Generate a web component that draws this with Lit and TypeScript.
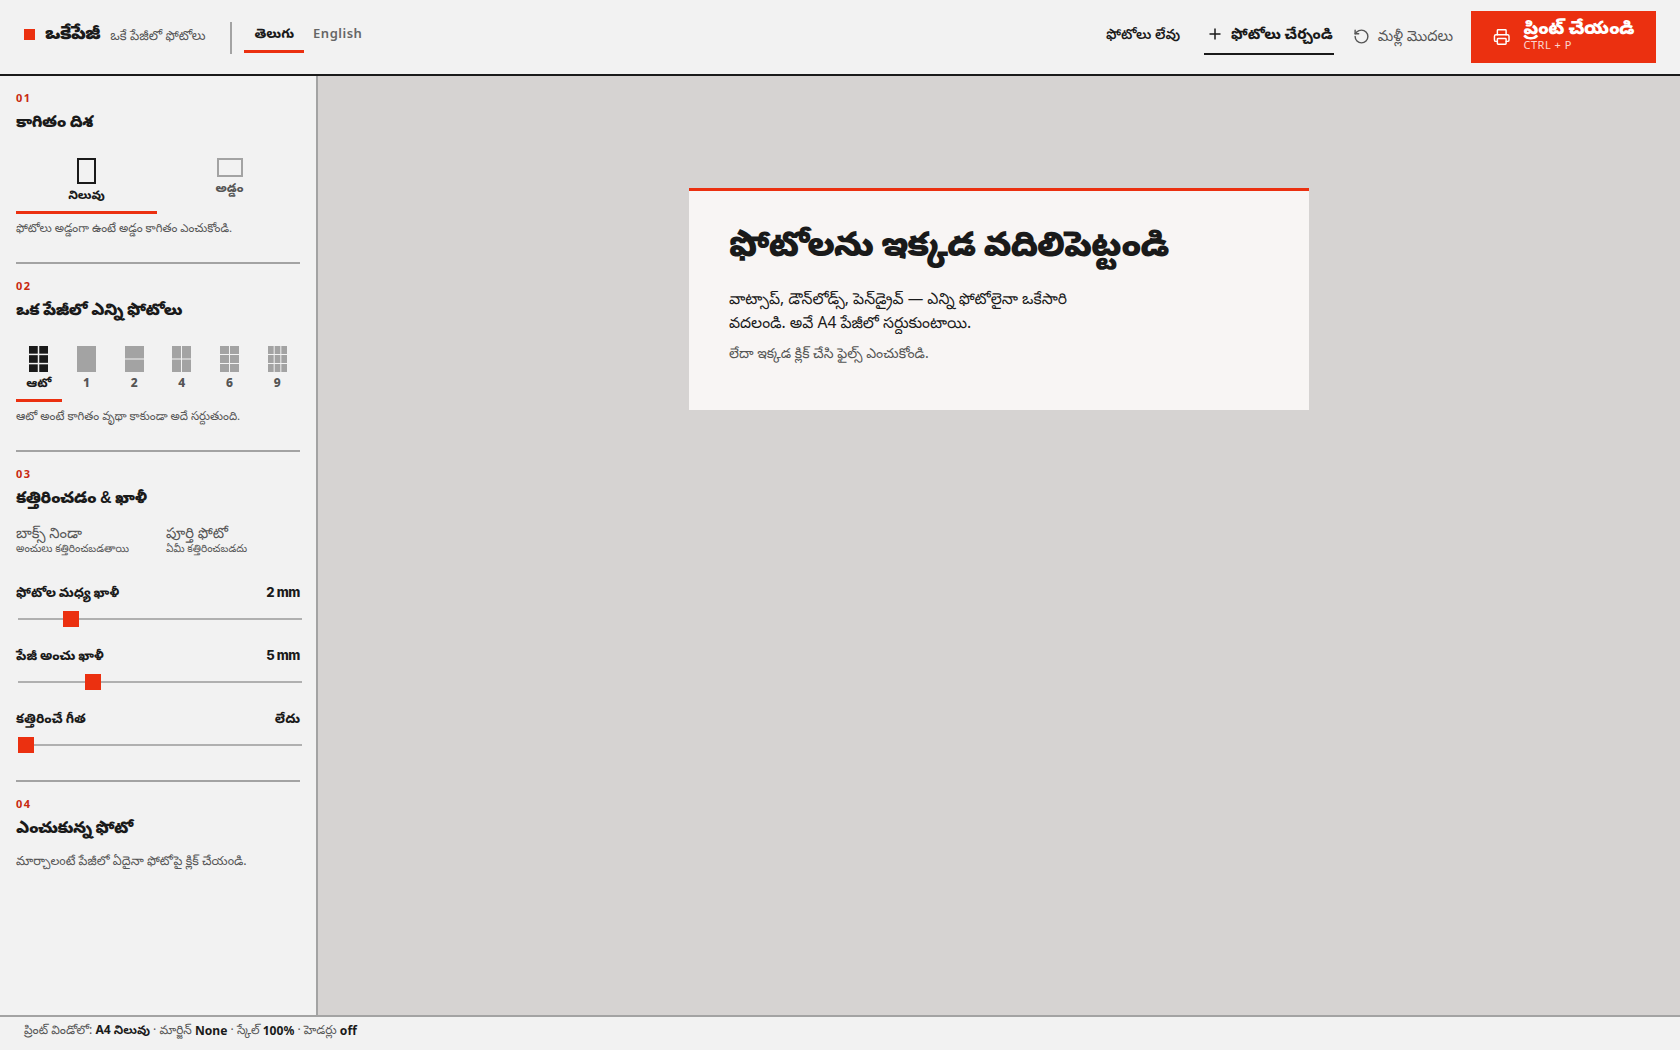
import { LitElement, html, css, svg } from "lit";
import { customElement } from "lit/decorators.js";

const GRIDS: [string, number, number, boolean][] = [
  ["ఆటో", 2, 3, true],
  ["1", 1, 1, false],
  ["2", 1, 2, false],
  ["4", 2, 2, false],
  ["6", 2, 3, false],
  ["9", 3, 3, false],
];

@customElement("app-root")
export class AppRoot extends LitElement {
  static styles = css`
    :host { display: flex; flex-direction: column; height: 1050px; overflow: hidden; background: #f2f2f2; color: #1a1a1a; font-family: "Noto Sans", "Noto Sans Telugu", sans-serif; }
    * { box-sizing: border-box; }
    header { height: 76px; flex: none; border-bottom: 2px solid #1a1a1a; display: flex; align-items: center; padding: 0 24px; }
    .sq { width: 11px; height: 11px; background: #eb3010; margin: 0 10px 6px 0; }
    .logo { font: 900 18px "Liberation Sans", "Noto Sans Telugu", sans-serif; letter-spacing: -.5px; margin-bottom: 4px; }
    .tag { font-size: 13px; color: #555; margin: 0 0 2px 10px; }
    .vr { width: 2px; height: 32px; background: #a3a3a3; margin: 2px 12px 0 25px; }
    .lang { height: 32px; padding: 0 10px 5px 9px; display: flex; align-items: center; font-size: 13px; font-weight: 600; color: #666; letter-spacing: .5px; border-bottom: 3px solid transparent; }
    .lang.on { color: #1a1a1a; border-color: #eb3010; letter-spacing: 0; font-weight: 800; padding: 0 10px 4px; }
    .sp { flex: 1; }
    .count { font-size: 14px; font-weight: 600; margin-right: 24px; padding-bottom: 4px; }
    .add { height: 36px; display: flex; align-items: center; gap: 10px; border-bottom: 2px solid #1a1a1a; padding: 0 1px 4px 5px; font-size: 14.5px; font-weight: 800; }
    .reset { display: flex; align-items: center; gap: 8px; font-size: 14.6px; color: #555; margin: 0 18px 2px 19px; }
    .print { width: 185px; height: 52px; background: #eb3010; color: #fff; display: flex; align-items: center; gap: 13px; padding: 0 22px 4px; }
    .print svg { margin-top: 4px; }
    .print b { display: block; font: 900 18px/20px "Liberation Sans", "Noto Sans Telugu", sans-serif; letter-spacing: -.5px; white-space: nowrap; }
    .print small { display: block; font-size: 11px; line-height: 14px; letter-spacing: .5px; opacity: .8; }
    .body { flex: 1; display: flex; min-height: 0; }
    aside { width: 318px; flex: none; border-right: 2px solid #a3a3a3; padding: 14px 16px 0; }
    section { border-bottom: 2px solid #a3a3a3; padding-bottom: 25px; margin-bottom: 14px; }
    section.s3 { padding-bottom: 10px; }
    section:last-child { border: 0; }
    .no { font-size: 11px; font-weight: 700; letter-spacing: 1.5px; color: #c8290f; line-height: 16px; }
    h2 { margin: 3px 0 12.5px; font: 900 16px/26px "Liberation Sans", "Noto Sans Telugu", sans-serif; letter-spacing: -.5px; }
    .hint { font-size: 11.6px; line-height: 18px; color: #555; margin: 0; }
    .hint.lg { font-size: 12.55px; margin-top: -1.5px; }
    .two { display: grid; grid-template-columns: 1fr 1fr; gap: 2px; margin: 15px 0 5px; }
    .ori { height: 64px; display: flex; flex-direction: column; align-items: center; padding-top: 8px; font: 800 12px/18px "Liberation Sans", "Noto Sans Telugu", sans-serif; color: #555; border-bottom: 3px solid transparent; }
    .ori.on { color: #1a1a1a; border-color: #eb3010; }
    .ori i { display: block; border: 2px solid #a3a3a3; width: 26px; height: 19px; margin-bottom: 2px; }
    .ori.on i { border-color: #1a1a1a; width: 19px; height: 26px; }
    .six { display: grid; grid-template-columns: repeat(6, 1fr); gap: 2px; margin: 17px 0 5px; }
    .cell { height: 62px; display: flex; flex-direction: column; align-items: center; font-size: 12px; font-weight: 800; line-height: 18px; color: #555; border-bottom: 3px solid transparent; padding-top: 6px; }
    .cell.on { color: #1a1a1a; border-color: #eb3010; font-family: "Liberation Sans", "Noto Sans Telugu", sans-serif; }
    .cell svg { display: block; margin-bottom: 2px; fill: #a3a3a3; }
    .cell.on svg { fill: #1a1a1a; }
    .fit { display: grid; grid-template-columns: 150px 1fr; margin-bottom: 26px; font-size: 14.7px; line-height: 17px; color: #555; }
    .fit small { display: block; font-size: 10.5px; line-height: 14px; }
    .row { display: flex; justify-content: space-between; font: 800 13px/22px "Inter", "Noto Sans Telugu", sans-serif; }
    .row .v { letter-spacing: -.4px; }
    input[type=range] { -webkit-appearance: none; appearance: none; display: block; width: 100%; height: 16px; margin: 8px 2px 17px; background: transparent; }
    input[type=range]::-webkit-slider-runnable-track { height: 2px; background: #b0b0b0; }
    input[type=range]::-webkit-slider-thumb { -webkit-appearance: none; width: 16px; height: 16px; margin-top: -7px; background: #eb3010; border: 0; border-radius: 0; }
    main { flex: 1; background: #d6d3d2; display: flex; justify-content: center; align-items: flex-start; padding-top: 112px; }
    .card { width: 620px; height: 222px; background: #f8f5f4; border-top: 3px solid #eb3010; padding: 30px 40px; }
    h1 { margin: 0 0 19px; font: 900 34px/46px "Liberation Sans", "Noto Sans Telugu", sans-serif; letter-spacing: -1.1px; }
    .lead { width: 380px; margin: 0 0 8px; font-size: 15.6px; line-height: 24px; }
    .or { margin: 0; font-size: 14px; line-height: 22px; color: #555; }
    footer { height: 35px; flex: none; border-top: 2px solid #a3a3a3; padding: 0 24px 6px; display: flex; align-items: center; font-size: 12.1px; color: #555; white-space: pre; }
    footer b { color: #1a1a1a; }
  `;

  grid(c: number, r: number, on: boolean) {
    const g = on ? 1.5 : 1, W = 19, H = 26;
    const w = (W - g * (c - 1)) / c, h = (H - g * (r - 1)) / r;
    const rects = [];
    for (let y = 0; y < r; y++) for (let x = 0; x < c; x++)
      rects.push(svg`<rect x=${x * (w + g)} y=${y * (h + g)} width=${w} height=${h}></rect>`);
    return html`<svg width="19" height="26" viewBox="0 0 19 26">${rects}</svg>`;
  }

  render() {
    return html`
      <header>
        <div class="sq"></div><div class="logo">ఒకేపేజీ</div><div class="tag">ఒకే పేజీలో ఫోటోలు</div>
        <div class="vr"></div>
        <div class="lang on">తెలుగు</div><div class="lang">English</div>
        <div class="sp"></div>
        <div class="count">ఫోటోలు లేవు</div>
        <div class="add"><svg width="12" height="12" viewBox="0 0 12 12"><path d="M6 .5v11M.5 6h11" stroke="#1a1a1a" stroke-width="1.5" fill="none"/></svg>ఫోటోలు చేర్చండి</div>
        <div class="reset"><svg width="17" height="17" viewBox="0 0 24 24" fill="none" stroke="#555" stroke-width="2" stroke-linecap="round" stroke-linejoin="round"><path d="M3 12a9 9 0 1 0 9-9 9.75 9.75 0 0 0-6.74 2.74L3 8"/><path d="M3 3v5h5"/></svg>మళ్లీ మొదలు</div>
        <div class="print"><svg width="24" height="24" viewBox="0 0 24 24" fill="none" stroke="#fff" stroke-width="2" stroke-linecap="round" stroke-linejoin="round"><path d="M6 18H4a2 2 0 0 1-2-2v-5a2 2 0 0 1 2-2h16a2 2 0 0 1 2 2v5a2 2 0 0 1-2 2h-2"/><path d="M6 9V3a1 1 0 0 1 1-1h10a1 1 0 0 1 1 1v6"/><rect x="6" y="14" width="12" height="8" rx="1"/></svg><div><b>ప్రింట్ చేయండి</b><small>CTRL + P</small></div></div>
      </header>
      <div class="body">
        <aside>
          <section>
            <div class="no">01</div><h2>కాగితం దిశ</h2>
            <div class="two"><div class="ori on"><i></i>నిలువు</div><div class="ori"><i></i>అడ్డం</div></div>
            <p class="hint">ఫోటోలు అడ్డంగా ఉంటే అడ్డం కాగితం ఎంచుకోండి.</p>
          </section>
          <section>
            <div class="no">02</div><h2>ఒక పేజీలో ఎన్ని ఫోటోలు</h2>
            <div class="six">${GRIDS.map(([l, c, r, on]) => html`<div class="cell ${on ? "on" : ""}">${this.grid(c, r, on)}${l}</div>`)}</div>
            <p class="hint">ఆటో అంటే కాగితం వృథా కాకుండా అదే సర్దుతుంది.</p>
          </section>
          <section class="s3">
            <div class="no">03</div><h2>కత్తిరించడం &amp; ఖాళీ</h2>
            <div class="fit"><div>బాక్స్ నిండా<small>అంచులు కత్తిరించబడతాయి</small></div><div>పూర్తి ఫోటో<small>ఏమీ కత్తిరించబడదు</small></div></div>
            <div class="row"><span>ఫోటోల మధ్య ఖాళీ</span><span class="v">2 mm</span></div>
            <input type="range" min="0" max="12" .value=${"2"} />
            <div class="row"><span>పేజీ అంచు ఖాళీ</span><span class="v">5 mm</span></div>
            <input type="range" min="0" max="20" .value=${"5"} />
            <div class="row"><span>కత్తిరించే గీత</span><span>లేదు</span></div>
            <input type="range" min="0" max="10" .value=${"0"} />
          </section>
          <section>
            <div class="no">04</div><h2>ఎంచుకున్న ఫోటో</h2>
            <p class="hint lg">మార్చాలంటే పేజీలో ఏదైనా ఫోటోపై క్లిక్ చేయండి.</p>
          </section>
        </aside>
        <main>
          <div class="card">
            <h1>ఫోటోలను ఇక్కడ వదిలిపెట్టండి</h1>
            <p class="lead">వాట్సాప్, డౌన్‌లోడ్స్, పెన్‌డ్రైవ్ — ఎన్ని ఫోటోలైనా ఒకేసారి వదలండి. అవే A4 పేజీలో సర్దుకుంటాయి.</p>
            <p class="or">లేదా ఇక్కడ క్లిక్ చేసి ఫైల్స్ ఎంచుకోండి.</p>
          </div>
        </main>
      </div>
      <footer>ప్రింట్ విండోలో: <b>A4 నిలువు</b> · మార్జిన్ <b>None</b> · స్కేల్ <b>100%</b> · హెడర్లు <b>off</b></footer>
    `;
  }
}
